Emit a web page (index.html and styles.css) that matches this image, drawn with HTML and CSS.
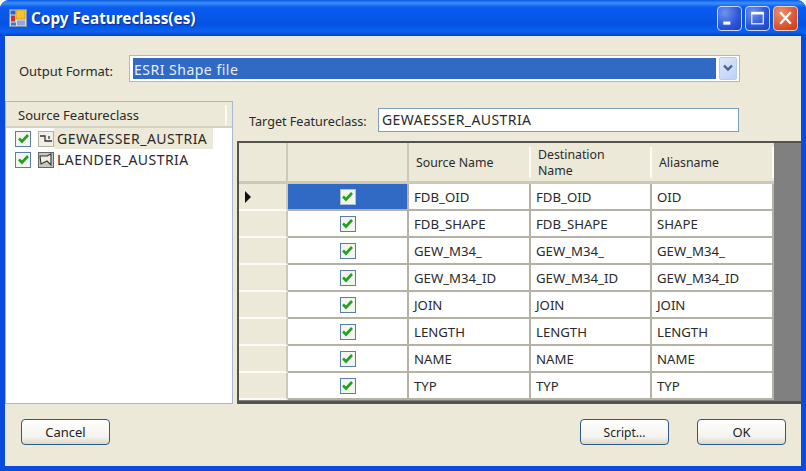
FILE: index.html
```html
<!DOCTYPE html>
<html lang="en">
<head>
<meta charset="UTF-8">
<title>Copy Featureclass(es)</title>
<link rel="stylesheet" href="styles.css">
</head>
<body>
<div class="window">
    <div class="titlebar">
        <svg class="app-icon" width="18" height="18" viewBox="0 0 18 18">
            <rect x="0.5" y="0.5" width="17" height="17" fill="#d8dde8" stroke="#8090b0"/>
            <rect x="1.5" y="1.5" width="5" height="4" fill="#2f62c8"/>
            <rect x="7" y="1" width="9" height="9" fill="#f4c430" stroke="#c09010" stroke-width="0.7"/>
            <rect x="2" y="6.5" width="4" height="6" fill="#c8322a"/>
            <rect x="2" y="13.5" width="5" height="3" fill="#3f78d8"/>
            <rect x="8" y="11.5" width="8" height="5" fill="#8fa8d8"/>
        </svg>
        <span class="title">Copy Featureclass(es)</span>
        <div class="win-buttons">
            <div class="win-btn">
                <svg width="24" height="24" viewBox="0 0 26 26"><rect x="6" y="17" width="8" height="3.5" fill="#fff"/></svg>
            </div>
            <div class="win-btn">
                <svg width="24" height="24" viewBox="0 0 26 26"><rect x="6.5" y="7.5" width="13" height="12" fill="none" stroke="#dfe8fb" stroke-width="1.5"/><rect x="6" y="6" width="14" height="3" fill="#fff"/></svg>
            </div>
            <div class="win-btn close">
                <svg width="24" height="24" viewBox="0 0 26 26"><path d="M7 6.5 L19 19.5 M19 6.5 L7 19.5" stroke="#fff" stroke-width="2.6"/></svg>
            </div>
        </div>
    </div>

    <div class="client">
        <div class="format-row">
            <label class="format-label">Output Format:</label>
            <div class="combo">
                <div class="combo-value">ESRI Shape file</div>
                <div class="combo-arrow">
                    <svg width="12" height="10" viewBox="0 0 12 10"><path d="M2 2.5 L6 6.5 L10 2.5" fill="none" stroke="#4d6185" stroke-width="2.4"/></svg>
                </div>
            </div>
        </div>

        <div class="main">
            <div class="source-panel">
                <div class="source-head"><span>Source Featureclass</span></div>
                <div class="tree-row">
                    <span class="check"><svg width="13" height="11" viewBox="0 0 13 11"><path d="M2 5.5 L5 8.5 L11 2" fill="none" stroke="#21a121" stroke-width="2.6"/></svg></span>
                    <svg class="layer-icon" width="16" height="16" viewBox="0 0 16 16"><rect x="0.5" y="0.5" width="15" height="15" fill="#f1efe6" stroke="#b5b2a5"/><path d="M2 5 H7 V10 H14 M11 5 V8" fill="none" stroke="#333" stroke-width="1.3"/></svg>
                    <span class="tree-label selected">GEWAESSER_AUSTRIA</span>
                </div>
                <div class="tree-row">
                    <span class="check"><svg width="13" height="11" viewBox="0 0 13 11"><path d="M2 5.5 L5 8.5 L11 2" fill="none" stroke="#21a121" stroke-width="2.6"/></svg></span>
                    <svg class="layer-icon" width="16" height="16" viewBox="0 0 16 16"><rect x="0.5" y="0.5" width="15" height="15" fill="#c9c7bd" stroke="#666"/><path d="M2 4 H9 L13 2 V13 L9 9 L3 12 Z" fill="#eeede6" stroke="#333" stroke-width="1.1"/></svg>
                    <span class="tree-label">LAENDER_AUSTRIA</span>
                </div>
            </div>

            <div class="right-panel">
                <div class="target-row">
                    <label class="target-label">Target Featureclass:</label>
                    <div class="target-input">GEWAESSER_AUSTRIA</div>
                </div>
                <div class="grid-view">
                    <div class="grid-table">
                        <div class="cell head corner"></div>
                        <div class="cell head corner"></div>
                        <div class="cell head"><span class="head-text">Source Name</span></div>
                        <div class="cell head"><span class="head-text">Destination<br>Name</span></div>
                        <div class="cell head"><span class="head-text">Aliasname</span></div>

                        <div class="cell row-head"><span class="row-arrow"></span></div>
                        <div class="cell check-cell current"><span class="check plain"><svg width="13" height="11" viewBox="0 0 13 11"><path d="M2 5.5 L5 8.5 L11 2" fill="none" stroke="#21a121" stroke-width="2.6"/></svg></span></div>
                        <div class="cell">FDB_OID</div><div class="cell">FDB_OID</div><div class="cell">OID</div>

                        <div class="cell row-head"></div>
                        <div class="cell check-cell"><span class="check"><svg width="13" height="11" viewBox="0 0 13 11"><path d="M2 5.5 L5 8.5 L11 2" fill="none" stroke="#21a121" stroke-width="2.6"/></svg></span></div>
                        <div class="cell">FDB_SHAPE</div><div class="cell">FDB_SHAPE</div><div class="cell">SHAPE</div>

                        <div class="cell row-head"></div>
                        <div class="cell check-cell"><span class="check"><svg width="13" height="11" viewBox="0 0 13 11"><path d="M2 5.5 L5 8.5 L11 2" fill="none" stroke="#21a121" stroke-width="2.6"/></svg></span></div>
                        <div class="cell">GEW_M34_</div><div class="cell">GEW_M34_</div><div class="cell">GEW_M34_</div>

                        <div class="cell row-head"></div>
                        <div class="cell check-cell"><span class="check"><svg width="13" height="11" viewBox="0 0 13 11"><path d="M2 5.5 L5 8.5 L11 2" fill="none" stroke="#21a121" stroke-width="2.6"/></svg></span></div>
                        <div class="cell">GEW_M34_ID</div><div class="cell">GEW_M34_ID</div><div class="cell">GEW_M34_ID</div>

                        <div class="cell row-head"></div>
                        <div class="cell check-cell"><span class="check"><svg width="13" height="11" viewBox="0 0 13 11"><path d="M2 5.5 L5 8.5 L11 2" fill="none" stroke="#21a121" stroke-width="2.6"/></svg></span></div>
                        <div class="cell">JOIN</div><div class="cell">JOIN</div><div class="cell">JOIN</div>

                        <div class="cell row-head"></div>
                        <div class="cell check-cell"><span class="check"><svg width="13" height="11" viewBox="0 0 13 11"><path d="M2 5.5 L5 8.5 L11 2" fill="none" stroke="#21a121" stroke-width="2.6"/></svg></span></div>
                        <div class="cell">LENGTH</div><div class="cell">LENGTH</div><div class="cell">LENGTH</div>

                        <div class="cell row-head"></div>
                        <div class="cell check-cell"><span class="check"><svg width="13" height="11" viewBox="0 0 13 11"><path d="M2 5.5 L5 8.5 L11 2" fill="none" stroke="#21a121" stroke-width="2.6"/></svg></span></div>
                        <div class="cell">NAME</div><div class="cell">NAME</div><div class="cell">NAME</div>

                        <div class="cell row-head"></div>
                        <div class="cell check-cell"><span class="check"><svg width="13" height="11" viewBox="0 0 13 11"><path d="M2 5.5 L5 8.5 L11 2" fill="none" stroke="#21a121" stroke-width="2.6"/></svg></span></div>
                        <div class="cell">TYP</div><div class="cell">TYP</div><div class="cell">TYP</div>
                    </div>
                </div>
            </div>
        </div>

        <div class="footer">
            <button class="btn">Cancel</button>
            <div class="footer-right">
                <button class="btn btn-script">Script...</button>
                <button class="btn">OK</button>
            </div>
        </div>
    </div>
</div>
</body>
</html>
```

FILE: styles.css
```css
html, body {
    margin: 0;
    padding: 0;
    background-color: #fff;
}

body {
    font-family: "Noto Sans", Arial, sans-serif;
    font-size: 13px;
    color: #2a2a2a;
}

.window {
    width: 806px;
    height: 471px;
    display: flex;
    flex-direction: column;
    background-color: #0a4ade;
    border-radius: 9px 9px 0 0;
    overflow: hidden;
}

.titlebar {
    height: 36px;
    flex: none;
    display: flex;
    align-items: center;
    padding: 0 8px 0 9px;
    background: linear-gradient(to bottom, #0a5ae6 0, #3d90f5 3px, #0a5df0 7px, #0453e2 24px, #0a62f2 32px, #0340c8 36px);
}

.app-icon {
    margin-right: 4px;
}

.title {
    color: #fff;
    font-weight: bold;
    font-size: 15.3px;
    text-shadow: 1px 1px 1px #0a2a90;
}

.win-buttons {
    margin-left: auto;
    display: flex;
    gap: 3px;
}

.win-btn {
    width: 25px;
    height: 25px;
    box-sizing: border-box;
    border: 1px solid #c8d8f8;
    border-radius: 4px;
    display: flex;
    align-items: center;
    justify-content: center;
    background: radial-gradient(circle at 30% 25%, #6f93ee, #2a55d8 60%, #1d3fc0);
}

.win-btn.close {
    background: radial-gradient(circle at 30% 25%, #ee9070, #dc5530 60%, #c43a10);
    border-color: #f0d0c0;
}

.client {
    flex: 1;
    margin: 0 5px 5px 5px;
    background-color: #ece9d8;
    display: flex;
    flex-direction: column;
    min-height: 0;
}

.format-row {
    height: 65px;
    flex: none;
    display: flex;
    align-items: center;
    padding: 4px 61px 0 14px;
    box-sizing: border-box;
}

.format-label {
    width: 110px;
    flex: none;
    letter-spacing: -0.05px;
}

.combo {
    flex: 1;
    height: 27px;
    display: flex;
    padding: 2px 2px 2px 3px;
    box-sizing: border-box;
    background-color: #fff;
    border: 1px solid #a5b9d5;
    margin-top: -5px;
}

.combo-value {
    flex: 1;
    background-color: #316ac5;
    color: #e8eefa;
    padding-left: 1px;
    font-size: 14px;
    letter-spacing: 0.5px;
    line-height: 23px;
}

.combo-arrow {
    width: 18px;
    margin-left: 3px;
    margin-top: -1px;
    margin-bottom: -1px;
    display: flex;
    align-items: center;
    justify-content: center;
    background: linear-gradient(135deg, #dfe9fd, #bdd0f8);
    border: 1px solid #b8caf0;
    border-radius: 2px;
    box-sizing: border-box;
}

.main {
    height: 303px;
    flex: none;
    display: flex;
    gap: 4px;
}

.source-panel {
    width: 228px;
    flex: none;
    box-sizing: border-box;
    background-color: #fff;
    border: 1px solid #a5b9d5;
}

.source-head {
    height: 26px;
    box-sizing: border-box;
    background-color: #ece9d8;
    border-bottom: 2px solid #d6d2c2;
    padding: 3px 0 0 12px;
    line-height: 20px;
}

.source-head span {
    display: block;
    margin-right: 5px;
    border-right: 2px solid #fbfaf5;
}

.tree-row {
    height: 21px;
    display: flex;
    align-items: center;
    padding-left: 9px;
}

.check {
    width: 16px;
    height: 16px;
    flex: none;
    box-sizing: border-box;
    display: inline-flex;
    align-items: center;
    justify-content: center;
    background-color: #f5f5ef;
    border: 1.5px solid #5b7ea8;
}

.check.plain {
    border-color: #a8c0d8;
}

.layer-icon {
    margin-left: 7px;
    flex: none;
}

.tree-label {
    padding: 0 6px 0 3px;
    font-size: 14px;
    letter-spacing: 0.47px;
    line-height: 21px;
}

.tree-label.selected {
    background-color: #ece9d8;
}

.right-panel {
    flex: 1;
    min-width: 0;
    display: flex;
    flex-direction: column;
}

.target-row {
    height: 40px;
    flex: none;
    display: flex;
    align-items: center;
    padding-left: 12px;
}

.target-label {
    width: 129px;
    flex: none;
    font-size: 12.6px;
}

.target-input {
    width: 361px;
    height: 24px;
    box-sizing: border-box;
    margin-top: -3px;
    background-color: #fff;
    border: 1px solid #7f9db9;
    padding-left: 3px;
    font-size: 14px;
    letter-spacing: 0.42px;
    line-height: 22px;
}

.grid-view {
    flex: 1;
    min-height: 0;
    background-color: #808080;
    border-top: 2px solid #55544c;
    border-left: 2px solid #55544c;
    border-bottom: 3px solid #55544c;
    overflow: hidden;
}

.grid-table {
    display: grid;
    width: 535px;
    grid-template-columns: 49px 121px 122px 121px 122px;
    grid-template-rows: 41px repeat(8, 27px);
    background-color: #fff;
}

.cell {
    box-sizing: border-box;
    background-color: #fff;
    border-right: 2px solid #b5b2a3;
    border-bottom: 2px solid #b5b2a3;
    display: flex;
    align-items: center;
    padding-left: 5px;
    white-space: nowrap;
    font-size: 13.2px;
}

.cell.head {
    background: linear-gradient(#fbfaf3, #fbfaf3) right center / 2px 31px no-repeat #ece9d8;
    border-right: 0;
    border-bottom: 3px solid #cdc9b8;
    padding: 3px 0 1px 7px;
    line-height: 16px;
    font-size: 12.3px;
}

.cell.head.corner {
    background: #ece9d8;
    border-right: 2px solid #cdc9b8;
}

.head-text {
    display: block;
}

.cell.row-head {
    background-color: #ece9d8;
    border-bottom: 2px solid #fbfaf3;
    border-right: 2px solid #cdc9b8;
    padding-left: 6px;
}

.row-arrow {
    width: 0;
    height: 0;
    border-left: 6px solid #111;
    border-top: 6px solid transparent;
    border-bottom: 6px solid transparent;
}

.check-cell {
    justify-content: center;
    padding-left: 0;
}

.check-cell.current {
    background-color: #316ac5;
}

.footer {
    flex: 1;
    display: flex;
    align-items: center;
    justify-content: space-between;
    padding: 0 15px 6px 16px;
}

.footer-right {
    display: flex;
    gap: 28px;
}

.btn {
    width: 89px;
    height: 26px;
    padding: 0;
    font-family: inherit;
    font-size: 13px;
    color: #222;
    background: linear-gradient(to bottom, #fff, #f4f3ee 70%, #dcd8ca);
    border: 1.5px solid #2f5a85;
    border-radius: 4px;
}

.btn-script {
    font-size: 12px;
}
```
